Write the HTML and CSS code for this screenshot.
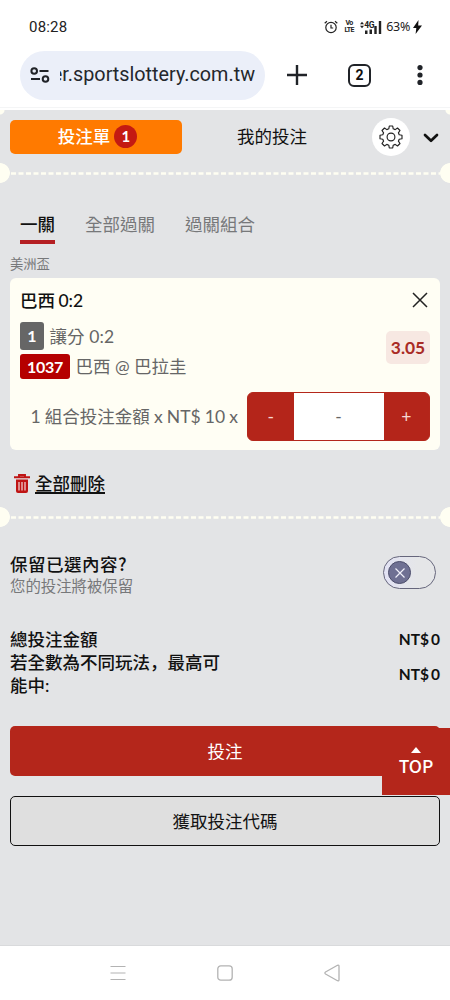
FILE: index.html
```html
<!DOCTYPE html>
<html lang="zh-Hant">
<head>
<meta charset="utf-8">
<meta name="viewport" content="width=device-width">
<title>投注單</title>
<link rel="stylesheet" href="styles.css">
</head>
<body>
<header class="status">
  <span class="clock">08:28</span>
  <div class="status-icons">
    <svg class="alarm" width="14" height="14" viewBox="0 0 14 14" fill="none" stroke="#222" stroke-width="1.2"><circle cx="7" cy="7.5" r="5.2"/><path d="M7 4.8V8h2.2M.7 3.2 3 1.2M13.300 3.200 11 1.200"/></svg>
    <span class="volte"><b>Vo</b><b>LTE</b></span>
    <span class="net"><svg width="5" height="8" viewBox="0 0 5 8" fill="#222"><path d="M2.500 0 5 3H0zM2.500 8 0 5h5z"/></svg><b>4G</b></span>
    <svg class="bars" width="17" height="13" viewBox="0 0 17 13" fill="#222"><path d="M0 9.500h2.500V13H0zM4.500 8.500H7V13H4.500zM9.300 5h2.400v8H9.300zM13.800 0h2.400v13h-2.400z"/></svg>
    <span class="battery">63%</span>
    <svg width="9" height="14" viewBox="0 0 9 14" fill="#111"><path d="M5.500 0 0 8h3.300L2.600 14 9 5.500H5.200z"/></svg>
  </div>
</header>
<div class="browser">
  <div class="url">
    <svg width="20" height="16" viewBox="0 0 20 16" fill="none" stroke="#202328" stroke-width="2"><circle cx="4.200" cy="4" r="2.800"/><path d="M9.500 4H18.500M1 12h9"/><circle cx="15.500" cy="12" r="2.800"/></svg>
    <div class="url-clip"><span>er.sportslottery.com.tw</span></div>
  </div>
  <svg class="plus" width="20" height="20" viewBox="0 0 20 20" stroke="#202328" stroke-width="2.400"><path d="M0 10h20M10 0v20"/></svg>
  <div class="tab-count">2</div>
  <svg class="more" width="6" height="20" viewBox="0 0 6 20" fill="#202328"><circle cx="3" cy="2.600" r="2.600"/><circle cx="3" cy="10" r="2.600"/><circle cx="3" cy="17.400" r="2.600"/></svg>
</div>
<main class="slip">
  <div class="top-tabs">
    <div class="tab-active">投注單<span class="count">1</span></div>
    <div class="tab-mine">我的投注</div>
    <div class="gear"><svg width="24" height="24" viewBox="0 0 24 24" fill="none" stroke="#222" stroke-width="1.150" stroke-linejoin="round"><path d="M10.300 1h3.400l.5 2.800 2 .8L18.500 3l2.500 2.500-1.600 2.300.8 2 2.800.5v3.400l-2.800.5-.8 2L21 18.500 18.500 21l-2.300-1.600-2 .8-.5 2.800h-3.400l-.5-2.800-2-.8L5.500 21 3 18.500l1.600-2.300-.8-2-2.800-.5v-3.400l2.800-.5.8-2L3 5.500 5.500 3l2.300 1.600 2-.8z"/><circle cx="12" cy="12" r="3.900"/></svg></div>
    <svg class="chev" width="16" height="10" viewBox="0 0 16 10" fill="none" stroke="#111" stroke-width="2.700" stroke-linecap="round" stroke-linejoin="round"><path d="m2 2 6 5.800L14 2"/></svg>
  </div>
  <div class="tear"><svg width="430" height="3"><path d="M1 1.500H430" stroke="#fffef2" stroke-width="2.400" stroke-dasharray="5 2.500"/></svg></div>
  <nav class="modes">
    <span class="mode on">一關</span><span class="mode">全部過關</span><span class="mode">過關組合</span>
  </nav>
  <div class="league">美洲盃</div>
  <section class="card">
    <div class="card-head"><span>巴西 0:2</span>
      <svg width="16" height="16" viewBox="0 0 16 16" stroke="#222" stroke-width="1.500"><path d="m1 1 14 14M15 1 1 15"/></svg></div>
    <div class="pick">
      <div class="lines">
        <div class="line"><span class="tag gray">1</span><span class="first-text">讓分 0:2</span></div>
        <div class="line second"><span class="tag red">1037</span>巴西 @ 巴拉圭</div>
      </div>
      <div class="odds">3.05</div>
    </div>
    <div class="stake">
      <span class="stake-label">1 組合投注金額 x NT$ 10 x</span>
      <div class="stepper"><span class="step">-</span><span class="amount">-</span><span class="step">+</span></div>
    </div>
  </section>
  <div class="remove">
    <svg width="16" height="19" viewBox="0 0 16 19" fill="none" stroke="#bf1414"><path d="M0 3.300h16M5 3V1h6v2" stroke-width="1.900"/><path d="M2 5.500h12V17q0 2-2 2H4q-2 0-2-2z" fill="#bf1414" stroke="none"/><path d="M5 8v8.500M8 8v8.500M11 8v8.500" stroke="#f2dcdc" stroke-width="1.200"/></svg>
    <span>全部刪除</span>
  </div>
  <div class="tear lower"><svg width="430" height="3"><path d="M1 1.500H430" stroke="#fffef2" stroke-width="2.400" stroke-dasharray="5 2.500"/></svg></div>
  <div class="keep">
    <div><div class="keep-title">保留已選內容?</div><div class="keep-sub">您的投注將被保留</div></div>
    <div class="toggle"><div class="knob"><svg width="10" height="10" viewBox="0 0 10 10" stroke="#f0f0fa" stroke-width="1.200"><path d="m.5.5 9 9M9.500.5l-9 9"/></svg></div></div>
  </div>
  <div class="totals">
    <div class="total"><span>總投注金額</span><b>NT$ 0</b></div>
    <div class="total"><span>若全數為不同玩法<span class="comma" lang="zh-Hans">，</span>最高可<br>能中:</span><b>NT$ 0</b></div>
  </div>
  <div class="actions">
    <div class="btn primary">投注</div>
    <div class="btn outline">獲取投注代碼</div>
    <div class="to-top"><svg width="10" height="6" viewBox="0 0 10 6" fill="#fff"><path d="M5 0 10 6H0z"/></svg>TOP</div>
  </div>
</main>
<footer class="sysnav">
  <svg width="16" height="16" viewBox="0 0 16 16" stroke="#b3b3b3" stroke-width="1.200"><path d="M.5 1.500h15M.5 8h15M.5 14.500h15"/></svg>
  <svg width="16" height="16" viewBox="0 0 16 16" fill="none" stroke="#b3b3b3" stroke-width="1.300"><rect x=".8" y=".8" width="14.400" height="14.400" rx="3"/></svg>
  <svg width="16" height="18" viewBox="0 0 16 18" fill="none" stroke="#b3b3b3" stroke-width="1.300" stroke-linejoin="round"><path d="M13.500 1.300 1.500 8Q.3 9 1.500 10l12 6.700q1.500.5 1.500-1V2.300q0-1.500-1.500-1z"/></svg>
</footer>
</body>
</html>
```
FILE: styles.css
```css
* { box-sizing: border-box; }
svg { display: block; flex: none; }
body {
  margin: 0;
  width: 450px;
  height: 1000px;
  overflow: hidden;
  display: flex;
  flex-direction: column;
  background: #fff;
  color: #111;
  font: 17.5px/24px Lato, "Noto Sans CJK TC", sans-serif;
}
.status {
  height: 50px;
  padding: 4px 28px 0 29px;
  display: flex;
  align-items: center;
  justify-content: space-between;
  color: #222;
  font-family: Roboto, sans-serif;
  font-size: 15px;
}
.clock { letter-spacing: .2px; }
.status-icons { display: flex; align-items: center; }
.volte {
  margin: 0 1px 0 6px;
  width: 10px;
  display: flex;
  flex-direction: column;
  align-items: center;
  font-size: 7px;
  line-height: 7px;
  letter-spacing: -.6px;
}
.net { display: flex; margin-left: 5px; height: 13px; font-size: 8.5px; line-height: 8px; letter-spacing: -.3px; }
.net svg { width: 4px; }
.bars { margin-left: -9px; }
.battery { margin: 0 3px 0 4px; font: 12.500px/16px "Noto Sans", sans-serif; letter-spacing: -.3px; }
.browser {
  height: 60px;
  padding: 0 27px 10px 20px;
  display: flex;
  align-items: center;
  background: linear-gradient(#f4f5f6, #f4f5f6) 0 57px / 100% 1px no-repeat;
  font-family: Roboto, sans-serif;
}
.url {
  width: 245px;
  height: 49px;
  padding-left: 10px;
  display: flex;
  align-items: center;
  border-radius: 25px;
  background: #ebeff9;
}
.url-clip {
  width: 195px;
  margin-left: 10px;
  display: flex;
  justify-content: flex-end;
  overflow: hidden;
  color: #24272c;
  font-size: 19.8px;
  white-space: nowrap;
}
.plus { margin-left: 22px; }
.tab-count {
  margin-left: 41px;
  width: 23px;
  height: 23px;
  border: 2.5px solid #202328;
  border-radius: 6px;
  font-size: 14px;
  font-weight: 700;
  line-height: 19px;
  text-align: center;
}
.more { margin-left: 46px; }
.slip {
  height: 835px;
  background:
    radial-gradient(circle at 0 0, #fffef2 4px, transparent 5px),
    radial-gradient(circle at 450px 0, #fffef2 4px, transparent 5px),
    #e3e4e6;
}
.top-tabs { height: 53px; padding: 0 10px; display: flex; align-items: center; }
.tab-active {
  width: 172px;
  height: 34px;
  padding-left: 3px;
  display: flex;
  align-items: center;
  justify-content: center;
  gap: 4px;
  border-radius: 5px;
  background: #ff7a00;
  color: #fff;
  font-weight: 500;
}
.count {
  width: 23px;
  height: 23px;
  border-radius: 50%;
  background: #c41a12;
  font-size: 15px;
  font-weight: 700;
  line-height: 22px;
  text-align: center;
}
.tab-mine { width: 180px; text-align: center; }
.gear {
  width: 38px;
  height: 38px;
  margin-left: 10px;
  display: grid;
  place-items: center;
  border-radius: 50%;
  background: #fff;
}
.chev { margin: 2px 0 0 13px; }
.tear {
  height: 20px;
  padding: 9px 10px 0;
  background:
    radial-gradient(circle at 0 50%, #fffef2 9.5px, transparent 10.2px),
    radial-gradient(circle at 450px 50%, #fffef2 9.5px, transparent 10.2px);
}
.modes { height: 61px; padding: 29px 20px 0; display: flex; gap: 30px; color: #77787a; }
.mode { height: 32px; padding-top: 1px; border-bottom: 4px solid transparent; }
.mode.on { color: #111; font-weight: 500; border-color: #b51f23; }
.league { height: 34px; padding: 8px 10px 0; color: #77787a; font-size: 13.3px; }
.card { margin: 0 10px; height: 172px; border-radius: 6px; background: #fffef4; color: #666; }
.card-head {
  height: 44px;
  padding: 0 12px 0 10px;
  display: flex;
  align-items: center;
  justify-content: space-between;
  color: #111;
  font-weight: 500;
  word-spacing: -1px;
}
.card-head span { padding-top: 2px; }
.pick { height: 57px; padding: 0 10px; display: flex; justify-content: space-between; }
.line { height: 28px; display: flex; align-items: center; gap: 5.5px; }
.first-text { padding-top: 2px; letter-spacing: .1px; }
.line.second { height: 25px; margin-top: 4px; }
.tag { border-radius: 3px; color: #fff; font-weight: 700; text-align: center; }
.tag.gray { width: 24px; height: 28px; background: #666; line-height: 28px; font-size: 16px; }
.tag.red { width: 50px; height: 25px; background: #b50000; line-height: 25px; font-size: 16px; letter-spacing: -.3px; }
.odds {
  width: 44px;
  height: 33px;
  margin-top: 9px;
  border-radius: 5px;
  background: #f7e8e2;
  color: #a92b25;
  font-size: 17.4px;
  font-weight: 700;
  line-height: 33px;
  text-align: center;
}
.stake { height: 71px; padding: 13px 10px 0; display: flex; justify-content: flex-end; gap: 9px; }
.stake-label { line-height: 49px; white-space: nowrap; word-spacing: -.3px; }
.stepper {
  width: 183px;
  height: 49px;
  display: flex;
  border: 1px solid #b4271b;
  border-radius: 6px;
  overflow: hidden;
  background: #b4251a;
  line-height: 47px;
  text-align: center;
}
.step { flex: 1; color: #f7d8d2; }
.amount { width: 90px; background: #fff; }
.remove { height: 57px; padding: 9px 14px 0; display: flex; align-items: center; gap: 5px; font-weight: 500; }
.remove span { padding-top: 1px; text-decoration: underline; text-underline-offset: 2px; text-decoration-thickness: 1.500px; }
.keep { height: 100px; padding: 25px 14px 0 10px; display: flex; justify-content: space-between; }
.keep-title { font-family: "Noto Sans CJK TC", sans-serif; font-weight: 500; letter-spacing: .5px; }
.keep-sub { color: #77787a; font-size: 15.4px; line-height: 20px; }
.toggle {
  width: 53px;
  height: 33px;
  margin: 4px 0 0;
  padding: 0 4px;
  display: flex;
  align-items: center;
  border: 1.500px solid #66667c;
  border-radius: 17px;
  background: linear-gradient(90deg, #e2e2f4, #e5e6e8 65%);
}
.knob {
  width: 23px;
  height: 23px;
  display: grid;
  place-items: center;
  border: 1.500px solid #4c4d6b;
  border-radius: 50%;
  background: #6f7093;
}
.totals { height: 99px; padding: 1px 10px 0; font-weight: 500; line-height: 23px; }
.total { display: flex; align-items: center; justify-content: space-between; }
.total b { font-size: 15.5px; word-spacing: -1.8px; }
.comma { font-family: "Noto Sans CJK SC", sans-serif; line-height: 1; }
.actions { position: relative; padding: 0 10px; display: grid; gap: 20px; }
.btn { height: 50px; border-radius: 5px; line-height: 51px; text-align: center; }
.primary { background: #b4261b; color: #fff; }
.outline { border: 1.500px solid #111; background: #dfdfdf; line-height: 50px; }
.to-top {
  position: absolute;
  top: 2px;
  right: 0;
  width: 68px;
  height: 67px;
  padding-top: 19px;
  display: flex;
  flex-direction: column;
  align-items: center;
  gap: 2px;
  background: #b4261b;
  color: #fff;
  font-family: "Noto Sans CJK TC", sans-serif;
  font-weight: 500;
  line-height: 22px;
}
.sysnav {
  height: 55px;
  padding: 0 110px;
  display: flex;
  align-items: center;
  justify-content: space-between;
  border-top: 1px solid #d9dadc;
}
```
